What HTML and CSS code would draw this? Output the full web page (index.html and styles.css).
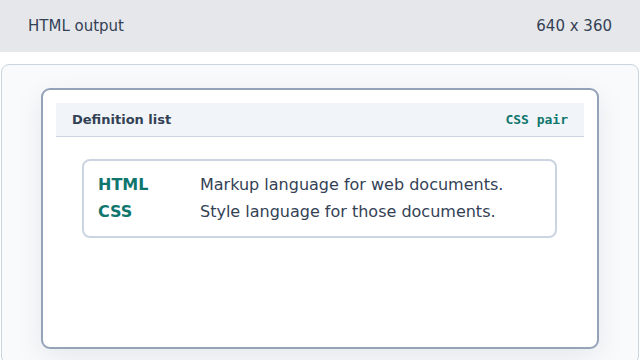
FILE: index.html
```html
<!DOCTYPE html>
<html lang="en">
<head>
    <meta charset="UTF-8">
    <meta name="viewport" content="width=device-width, initial-scale=1.0">
    <title>HTML output</title>
    <link rel="stylesheet" href="styles.css">
</head>
<body>
    <header class="topbar">
        <span>HTML output</span>
        <span>640 x 360</span>
    </header>

    <main class="stage">
        <section class="card">
            <div class="card-head">
                <h2>Definition list</h2>
                <code>CSS pair</code>
            </div>

            <dl class="terms">
                <dt>HTML</dt>
                <dd>Markup language for web documents.</dd>
                <dt>CSS</dt>
                <dd>Style language for those documents.</dd>
            </dl>
        </section>
    </main>
</body>
</html>
```

FILE: styles.css
```css
/* General Styles */
body {
    margin: 0;
    width: 640px;
    height: 360px;
    overflow: hidden;
    background: #ffffff;
    font-family: "DejaVu Sans", sans-serif;
    color: #334155;
}

/* Top Bar */
.topbar {
    height: 52px;
    padding: 0 28px;
    display: flex;
    align-items: center;
    justify-content: space-between;
    background-color: #e5e7eb;
    color: #334155;
    font-size: 15px;
}

/* Stage Panel */
.stage {
    margin: 12px 1px 0;
    height: 300px;
    padding: 23px 39px 0;
    box-sizing: border-box;
    background-color: #f8fafc;
    border: 1px solid #cbd5e1;
    border-radius: 8px;
}

/* Card */
.card {
    height: 261px;
    box-sizing: border-box;
    padding: 13px;
    background-color: #fff;
    border: 2px solid #94a3b8;
    border-radius: 9px;
    box-shadow: 0 8px 28px rgba(15, 23, 42, 0.08);
}

.card-head {
    height: 34px;
    box-sizing: border-box;
    padding: 0 16px;
    display: flex;
    align-items: center;
    justify-content: space-between;
    background-color: #f1f5f9;
    border-bottom: 1px solid #cbd5e1;
}

.card-head h2 {
    margin: 0;
    font-size: 13px;
    font-weight: bold;
    color: #334155;
}

.card-head code {
    font-family: "DejaVu Sans Mono", monospace;
    font-size: 13px;
    font-weight: bold;
    color: #0f766e;
}

/* Definition List */
.terms {
    margin: 22px 27px 0 26px;
    padding: 10px 14px 11px;
    display: grid;
    grid-template-columns: 102px 1fr;
    line-height: 27px;
    font-size: 16px;
    border: 2px solid #cbd5e1;
    border-radius: 8px;
}

.terms dt {
    font-weight: bold;
    color: #0f766e;
}

.terms dd {
    margin: 0;
    color: #334155;
}
```
